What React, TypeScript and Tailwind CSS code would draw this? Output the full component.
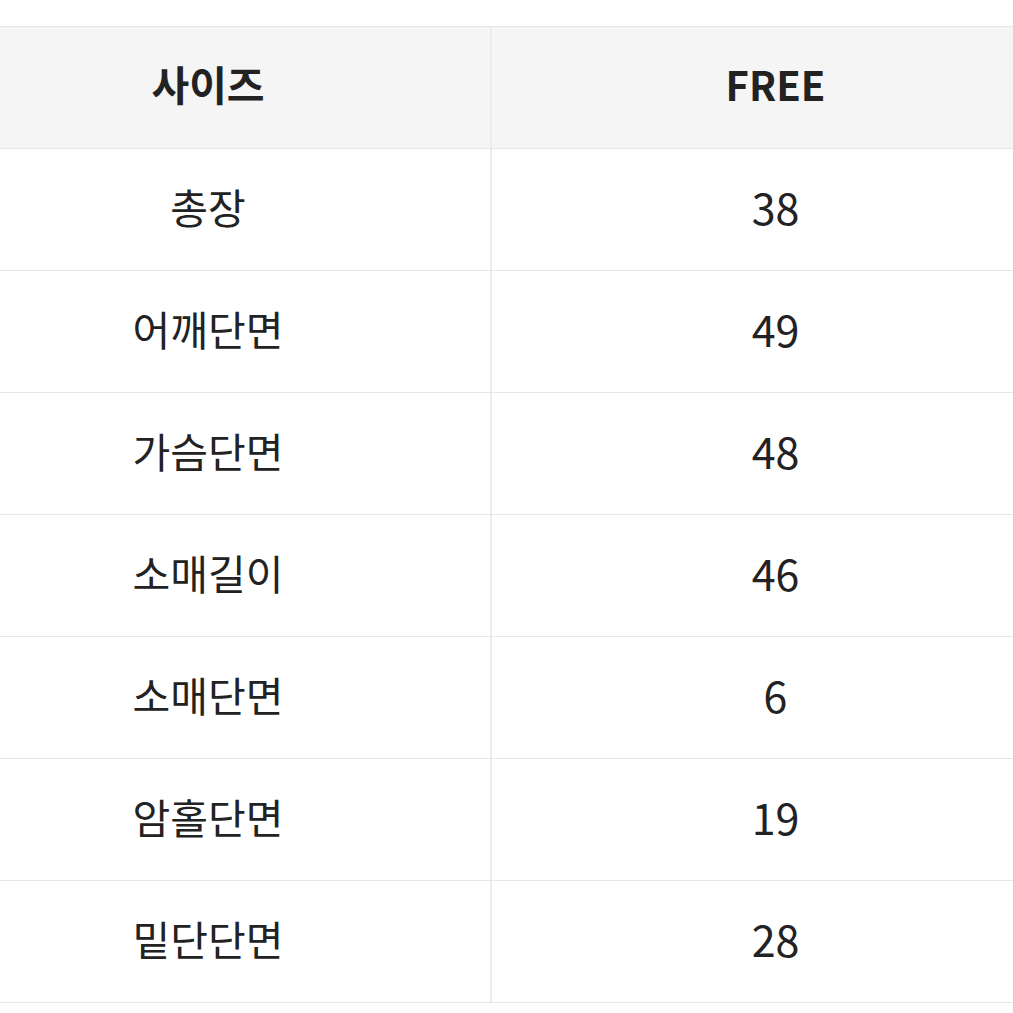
import React from 'react';

// 사이즈 표 (단위: cm)
const rows: { label: string; value: string }[] = [
  { label: '총장', value: '38' },
  { label: '어깨단면', value: '49' },
  { label: '가슴단면', value: '48' },
  { label: '소매길이', value: '46' },
  { label: '소매단면', value: '6' },
  { label: '암홀단면', value: '19' },
  { label: '밑단단면', value: '28' },
];

const font = { fontFamily: '"Noto Sans CJK KR", "Noto Sans", sans-serif' };

export default function App() {
  return (
    <div className="h-screen w-full overflow-hidden bg-white pt-[26px]" style={font}>
      <div className="ml-[-74px] w-[1133px] border-t border-[#e6e6e6]">
        {/* 헤더 */}
        <div className="grid grid-cols-[566px_1fr] border-b border-[#e6e6e6] bg-[#f5f5f5]">
          <div className="flex h-[121px] items-center justify-center border-r-2 border-[#ececec] pb-[7px] text-[41px] font-bold text-[#222]">
            사이즈
          </div>
          <div className="flex h-[121px] items-center justify-center pb-[7px] text-[40px] font-bold text-[#222]">
            FREE
          </div>
        </div>

        {rows.map((row) => (
          <div key={row.label} className="grid grid-cols-[566px_1fr] border-b border-[#e6e6e6]">
            <div className="flex h-[121px] items-center justify-center border-r-2 border-[#ececec] pb-[6px] text-[41px] text-[#222]">
              {row.label}
            </div>
            <div className="flex h-[121px] items-center justify-center pb-[6px] text-[43px] text-[#222]">
              {row.value}
            </div>
          </div>
        ))}
      </div>
    </div>
  );
}
